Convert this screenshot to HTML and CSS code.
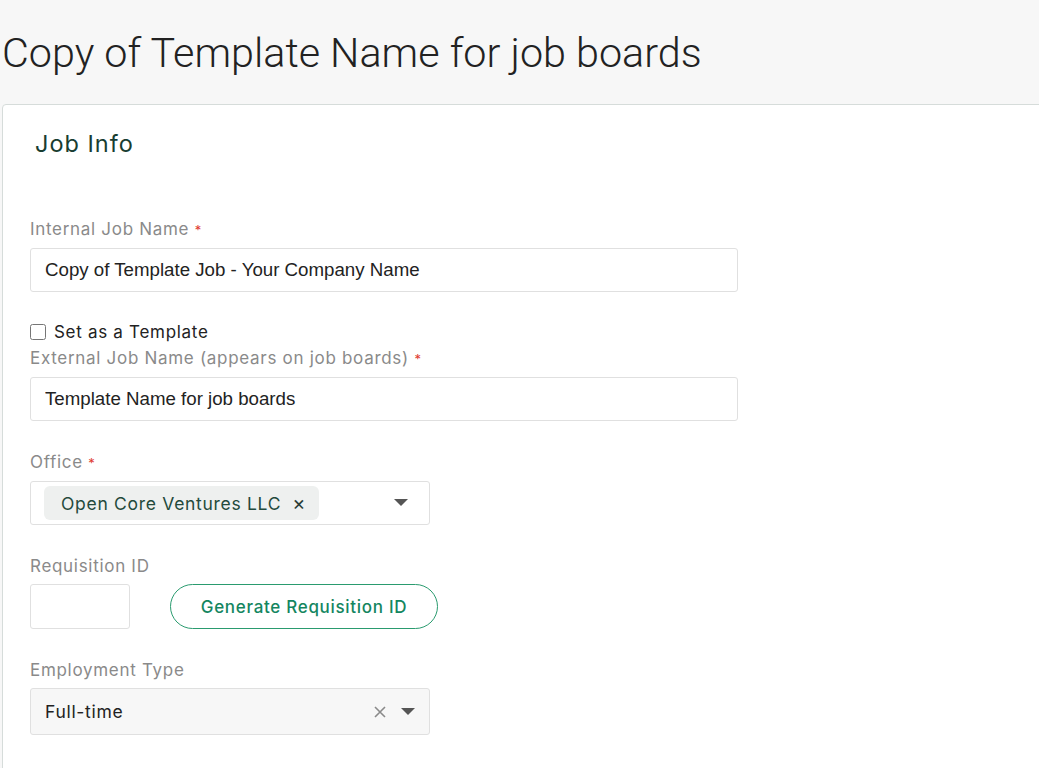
FILE: index.html
```html
<!DOCTYPE html>
<html lang="en">

<head>
  <meta charset="UTF-8" />
  <meta name="viewport" content="width=device-width, initial-scale=1.0" />
  <title>Copy of Template Name for job boards</title>
  <link rel="stylesheet" href="styles.css">
</head>

<body>

  <h1 class="page-title">Copy of Template Name for job boards</h1>

  <div class="card">
    <h2 class="card-title">Job Info</h2>

    <div class="field">
      <label class="label" for="internalName">Internal Job Name <span class="req">*</span></label>
      <input class="text-input" type="text" id="internalName" value="Copy of Template Job - Your Company Name" />
    </div>

    <div class="check-row">
      <input type="checkbox" id="template" />
      <label for="template">Set as a Template</label>
    </div>

    <div class="field">
      <label class="label" for="externalName">External Job Name (appears on job boards) <span class="req">*</span></label>
      <input class="text-input" type="text" id="externalName" value="Template Name for job boards" />
    </div>

    <div class="field">
      <label class="label">Office <span class="req">*</span></label>
      <div class="select office">
        <span class="chip">Open Core Ventures LLC <span class="chip-x">&#215;</span></span>
        <span class="select-icons">
          <svg class="caret" width="14" height="8" viewBox="0 0 14 8"><path d="M0 0h14L7 7z" fill="#555" /></svg>
        </span>
      </div>
    </div>

    <div class="field">
      <label class="label" for="reqId">Requisition ID</label>
      <div class="req-row">
        <input class="text-input small" type="text" id="reqId" />
        <button class="btn-outline">Generate Requisition ID</button>
      </div>
    </div>

    <div class="field">
      <label class="label">Employment Type</label>
      <div class="select filled">
        <span class="select-value">Full-time</span>
        <span class="select-icons">
          <svg class="clear" width="12" height="12" viewBox="0 0 12 12"><path d="M1 1l10 10M11 1L1 11" stroke="#8a8a8a" stroke-width="1.6" /></svg>
          <svg class="caret" width="14" height="8" viewBox="0 0 14 8"><path d="M0 0h14L7 7z" fill="#555" /></svg>
        </span>
      </div>
    </div>
  </div>

</body>

</html>
```

FILE: styles.css
```css
body {
  margin: 0;
  background-color: #f7f7f7;
  font-family: Inter, "Liberation Sans", sans-serif;
  color: #222;
  overflow: hidden;
}

.page-title {
  margin: 0;
  padding: 28px 0 0 2px;
  height: 104px;
  box-sizing: border-box;
  font-family: Roboto, "Liberation Sans", sans-serif;
  font-size: 41.3px;
  font-weight: 300;
  line-height: 50px;
  color: #222;
}

.card {
  margin-left: 2px;
  width: 1100px;
  min-height: 700px;
  background-color: #fff;
  border: 1px solid #d6dcda;
  border-radius: 4px 0 0 0;
  padding: 24px 27px;
}

.card-title {
  margin: 0 0 60px 5px;
  font-size: 23.5px;
  font-weight: 400;
  letter-spacing: 1px;
  line-height: 30px;
  color: #183d31;
}

.field {
  margin-bottom: 31px;
}

.label {
  display: block;
  font-size: 17px;
  letter-spacing: 0.7px;
  line-height: 20px;
  color: #8a8a8a;
  margin-bottom: 8px;
}

.req {
  color: #e0392f;
  font-size: 13px;
}

.text-input {
  display: block;
  box-sizing: border-box;
  width: 708px;
  height: 44px;
  border: 1px solid #e0e0e0;
  border-radius: 3px;
  padding: 0 14px;
  font-family: "Liberation Sans", Arial, sans-serif;
  font-size: 18.7px;
  color: #222;
}

.check-row {
  display: flex;
  align-items: center;
  gap: 8px;
  margin: -2px 0 5px;
  font-size: 17px;
  letter-spacing: 0.7px;
  line-height: 22px;
  color: #222;
}

.check-row input {
  margin: 0;
  width: 16px;
  height: 16px;
}

.select {
  box-sizing: border-box;
  width: 400px;
  height: 44px;
  border: 1px solid #e0e0e0;
  border-radius: 3px;
  display: flex;
  align-items: center;
  justify-content: space-between;
  padding: 0 21px 0 13px;
}

.chip {
  display: flex;
  align-items: center;
  height: 34px;
  padding: 0 13px 0 17px;
  background-color: #eef0ef;
  border-radius: 6px;
  font-size: 17.5px;
  letter-spacing: 0.7px;
  color: #244a3c;
}

.chip-x {
  margin-left: 11px;
  font-size: 20px;
  color: #2a3d36;
}

.select-icons {
  display: flex;
  align-items: center;
  gap: 15px;
}

.req-row {
  display: flex;
  align-items: center;
  gap: 40px;
}

.text-input.small {
  width: 100px;
  height: 45px;
}

.btn-outline {
  width: 268px;
  height: 45px;
  border: 1.5px solid #2a9b6f;
  border-radius: 23px;
  background-color: #fff;
  font-family: Inter, "Liberation Sans", sans-serif;
  font-size: 17px;
  font-weight: 500;
  letter-spacing: 0.7px;
  color: #14865f;
}

.select.filled {
  margin-top: 3px;
  height: 47px;
  background-color: #f7f7f7;
  padding: 0 14px;
}

.select-value {
  font-size: 17.5px;
  letter-spacing: 0.7px;
  color: #222;
}
```
